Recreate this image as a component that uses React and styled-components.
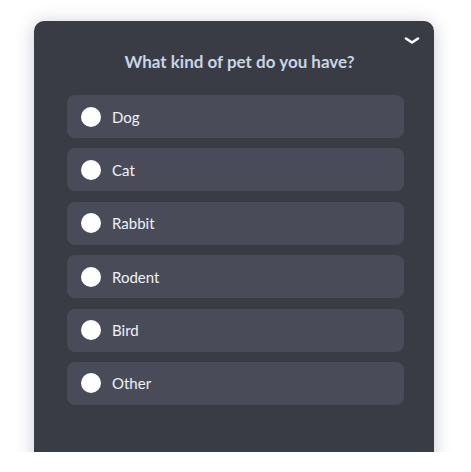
import React, { useState } from 'react';
import styled, { createGlobalStyle } from 'styled-components';

const GlobalStyle = createGlobalStyle`
  html, body {
    margin: 0;
    padding: 0;
    background: #ffffff;
    font-family: Lato, "Liberation Sans", sans-serif;
  }
`;

const Stage = styled.div`
  height: 452px;
  overflow: hidden;
  padding: 21px 0 0 34px;
  box-sizing: border-box;
`;

const Panel = styled.div`
  position: relative;
  width: 400px;
  height: 480px;
  box-sizing: border-box;
  background: #393c45;
  border-radius: 10px;
  box-shadow: 0 2px 18px rgba(60, 70, 100, 0.28);
  padding: 29px 30px 0 33px;
`;

const Collapse = styled.button`
  position: absolute;
  top: 13px;
  right: 12px;
  width: 20px;
  height: 14px;
  padding: 0;
  border: none;
  background: none;
  cursor: pointer;
  display: flex;
  align-items: center;
  justify-content: center;
`;

const Title = styled.h2`
  margin: 0 0 22px;
  padding-left: 8px;
  text-align: center;
  font-size: 17px;
  font-weight: 700;
  color: #c8d5e5;
  line-height: 23px;
`;

const Options = styled.div`
  display: flex;
  flex-direction: column;
  gap: 10.4px;
`;

const Option = styled.label`
  display: flex;
  align-items: center;
  height: 43px;
  padding-left: 14px;
  border-radius: 8px;
  background: ${p => (p.$active ? '#525663' : '#494c58')};
  cursor: pointer;
`;

const Radio = styled.span`
  width: 20px;
  height: 20px;
  border-radius: 50%;
  background: #ffffff;
  box-sizing: border-box;
  border: ${p => (p.$checked ? '6px solid #5b8def' : 'none')};
  margin-right: 11px;
  flex-shrink: 0;
`;

const Label = styled.span`
  font-size: 15px;
  color: #eef1f6;
  line-height: 20px;
`;

const pets = ['Dog', 'Cat', 'Rabbit', 'Rodent', 'Bird', 'Other'];

export default function App() {
  const [choice, setChoice] = useState(null);

  return (
    <>
      <GlobalStyle />
      <Stage>
        <Panel>
          <Collapse aria-label="Collapse">
            <svg width="16" height="8" viewBox="0 0 16 8">
              <path d="M2 1.5 L8 5.5 L14 1.5" fill="none" stroke="#ffffff" strokeWidth="2.6" strokeLinecap="round" strokeLinejoin="round" />
            </svg>
          </Collapse>
          <Title>What kind of pet do you have?</Title>
          <Options>
            {pets.map(pet => (
              <Option key={pet} onClick={() => setChoice(pet)}>
                <Radio $checked={choice === pet} />
                <Label>{pet}</Label>
              </Option>
            ))}
          </Options>
        </Panel>
      </Stage>
    </>
  );
}
